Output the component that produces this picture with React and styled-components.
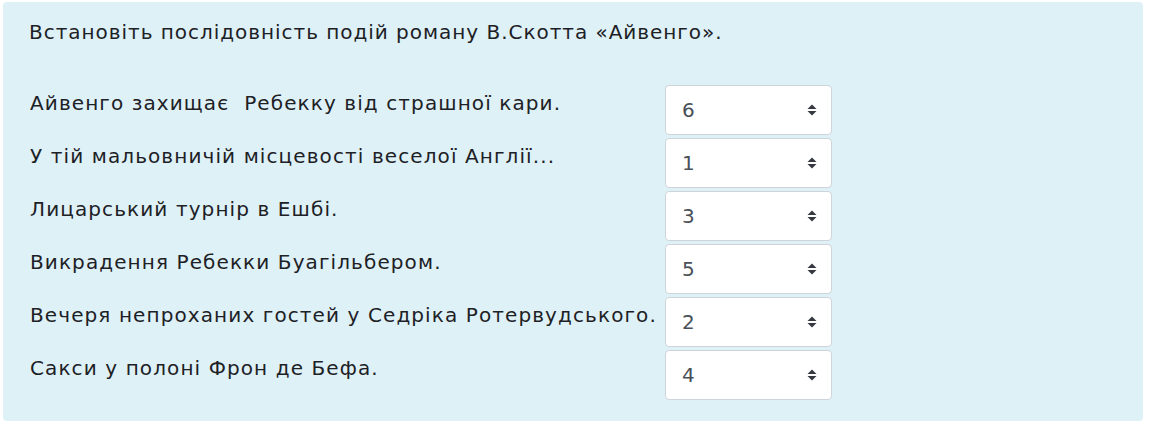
import { createGlobalStyle } from "styled-components";
import styled from "styled-components";

const GlobalStyle = createGlobalStyle`
  body {
    margin: 0;
    background: #ffffff;
    font-family: "DejaVu Sans", "Open Sans", sans-serif;
  }
`;

const items = [
  { text: "Айвенго захищає  Ребекку від страшної кари.", value: "6" },
  { text: "У тій мальовничій місцевості веселої Англії...", value: "1" },
  { text: "Лицарський турнір в Ешбі.", value: "3" },
  { text: "Викрадення Ребекки Буагільбером.", value: "5" },
  { text: "Вечеря непроханих гостей у Седріка Ротервудського.", value: "2" },
  { text: "Сакси у полоні Фрон де Бефа.", value: "4" },
];

function App() {
  return (
    <>
      <GlobalStyle />
      <Panel>
        <Question>Встановіть послідовність подій роману В.Скотта «Айвенго».</Question>
        <Answers>
          {items.map((item, i) => (
            <Row key={i}>
              <Label>{item.text}</Label>
              <SelectWrap>
                <Select defaultValue={item.value}>
                  {["1", "2", "3", "4", "5", "6"].map((n) => (
                    <option key={n} value={n}>{n}</option>
                  ))}
                </Select>
                <Arrow width="10" height="12" viewBox="0 0 10 12">
                  <path d="M5 0.5 L9.5 5 L0.5 5 Z" fill="#343a40" />
                  <path d="M0.5 7 L9.5 7 L5 11.5 Z" fill="#343a40" />
                </Arrow>
              </SelectWrap>
            </Row>
          ))}
        </Answers>
      </Panel>
    </>
  );
}

export default App;

const Panel = styled.div`
  margin: 2px 12px 0 3px;
  padding: 15px 26px 21px 26px;
  background-color: #def1f7;
  border-radius: 4px;
  color: #1d2125;
`;

const Question = styled.p`
  margin: 0 0 38px 0;
  font-size: 20px;
  line-height: 30px;
  letter-spacing: 0.97px;
`;

const Answers = styled.div`
  display: grid;
  grid-template-columns: max-content 167px;
  row-gap: 3px;
  column-gap: 8px;
`;

const Row = styled.div`
  display: contents;
`;

const Label = styled.div`
  padding: 3px 0 0 1px;
  font-size: 20px;
  line-height: 30px;
  letter-spacing: 1.1px;
  white-space: pre-wrap;
`;

const SelectWrap = styled.div`
  position: relative;
  height: 50px;
`;

const Select = styled.select`
  appearance: none;
  width: 100%;
  height: 100%;
  padding: 0 30px 0 16px;
  border: 1px solid #ced4da;
  border-radius: 4px;
  background: #ffffff;
  color: #495057;
  font-family: inherit;
  font-size: 20px;
`;

const Arrow = styled.svg`
  position: absolute;
  right: 15px;
  top: 19px;
  pointer-events: none;
`;
